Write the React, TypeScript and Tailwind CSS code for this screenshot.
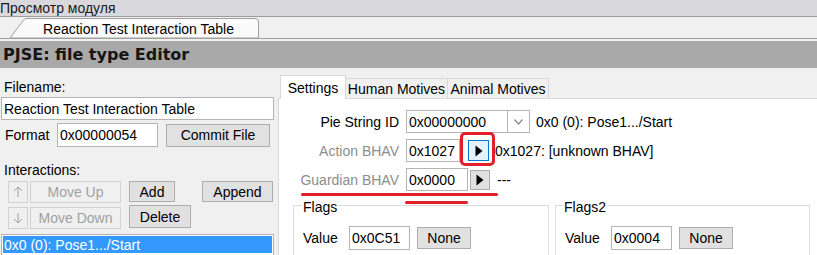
import React from "react";

const Btn = ({ children, className = "" }: { children: React.ReactNode; className?: string }) => (
  <div
    className={
      "flex items-center justify-center border border-[#adadad] bg-[#e1e1e1] text-[#000] shrink-0 " + className
    }
  >
    {children}
  </div>
);

const DisBtn = ({ children, className = "" }: { children: React.ReactNode; className?: string }) => (
  <div
    className={
      "flex items-center justify-center border border-[#d2d2d2] bg-[#f0f0f0] text-[#a0a0a0] shrink-0 " + className
    }
  >
    {children}
  </div>
);

const Tri = () => (
  <svg width="8" height="12" viewBox="0 0 8 12">
    <path d="M0.5 0.5 L7.5 6 L0.5 11.5 Z" fill="#000" />
  </svg>
);

export default function App() {
  return (
    <div className="w-[817px] h-[255px] overflow-hidden bg-[#f0f0f0] font-['Liberation_Sans',Arial,sans-serif] text-[14px] leading-[16px] text-black relative flex flex-col">
      {/* title bar */}
      <div className="shrink-0 h-[17px] bg-[#d9d9dd] border-b border-[#9d9d9d] flex items-center pl-0 text-[#1a1a1a]">
        Просмотр модуля
      </div>
      {/* tab strip */}
      <div className="shrink-0 h-[22px] border-b border-[#a0a0a0] bg-[#f0f0f0] flex items-end">
        <div className="relative ml-[10px] w-[249px] h-[20px] flex items-center justify-center">
          <svg className="absolute inset-0" width="249" height="20" viewBox="0 0 249 20">
            <path d="M0 20 L14 1.5 Q15 0.5 17 0.5 L245 0.5 Q248.5 0.5 248.5 4 L248.5 20 Z" fill="#fafafa" stroke="#a0a0a0" strokeWidth="1" />
          </svg>
          <span className="relative pl-[8px] pt-[1px]">Reaction Test Interaction Table</span>
        </div>
      </div>
      <div className="shrink-0 h-[2px] bg-[#f0f0f0]" />
      {/* header */}
      <div className="shrink-0 h-[27px] bg-[#a9a9a9] flex items-center pl-[3px] font-['DejaVu_Sans',sans-serif] font-bold text-[16px] text-[#151515]">
        PJSE: file type Editor
      </div>
      {/* content */}
      <div className="flex h-[187px] shrink-0">
        {/* left column */}
        <div className="w-[276px] flex flex-col pl-[1px] shrink-0">
          <div className="shrink-0 mt-[11px] h-[16px] pl-[3px]">Filename:</div>
          <div className="shrink-0 mt-[2px] w-[273px] h-[23px] bg-white border border-[#b4b4b4] flex items-center pl-[2px]">
            Reaction Test Interaction Table
          </div>
          <div className="shrink-0 mt-[3px] flex items-center h-[24px]">
            <span className="pl-[4px] w-[56px]">Format</span>
            <div className="w-[101px] h-[24px] bg-white border border-[#b4b4b4] flex items-center pl-[2px]">0x00000054</div>
            <Btn className="ml-[8px] w-[104px] h-[23px]">Commit File</Btn>
          </div>
          <div className="shrink-0 mt-[15px] h-[16px] pl-[3px]">Interactions:</div>
          <div className="shrink-0 mt-[3px] flex items-start h-[22px]">
            <DisBtn className="ml-[7px] w-[20px] h-[22px]">
              <svg width="10" height="12" viewBox="0 0 10 12">
                <path d="M5 1 L5 11 M1 5 L5 1 L9 5" fill="none" stroke="#a0a0a0" strokeWidth="1" />
              </svg>
            </DisBtn>
            <DisBtn className="ml-[2px] w-[91px] h-[22px]">Move Up</DisBtn>
            <Btn className="ml-[8px] w-[46px] h-[21px]">Add</Btn>
            <Btn className="ml-[27px] w-[71px] h-[21px]">Append</Btn>
          </div>
          <div className="shrink-0 mt-[4px] flex items-start h-[22px]">
            <DisBtn className="ml-[7px] w-[20px] h-[22px]">
              <svg width="10" height="12" viewBox="0 0 10 12">
                <path d="M5 1 L5 11 M1 7 L5 11 L9 7" fill="none" stroke="#a0a0a0" strokeWidth="1" />
              </svg>
            </DisBtn>
            <DisBtn className="ml-[2px] w-[91px] h-[22px]">Move Down</DisBtn>
            <Btn className="ml-[8px] w-[62px] h-[23px] -mt-[2px]">Delete</Btn>
          </div>
          <div className="mt-[5px] w-[273px] flex-1 bg-white border border-[#b4b4b4] border-b-0 pt-[1px] px-[1px]">
            <div className="h-[17px] bg-[#3399ff] text-white flex items-center pl-[1px]">0x0 (0): Pose1.../Start</div>
          </div>
        </div>
        {/* right tab control */}
        <div className="ml-[2px] flex-1 flex flex-col">
          <div className="shrink-0 h-[30px] flex items-end">
            <div className="ml-[2px] w-[66px] h-[24px] bg-white border border-[#d9d9d9] border-b-0 flex items-start justify-center pt-[4px] -mb-[1px] relative z-10">
              Settings
            </div>
            <div className="w-[102px] h-[20px] bg-[#f0f0f0] border border-[#d9d9d9] border-b-0 border-l-0 flex items-center justify-center">
              Human Motives
            </div>
            <div className="w-[101px] h-[20px] bg-[#f0f0f0] border border-[#d9d9d9] border-b-0 border-l-0 flex items-center justify-center">
              Animal Motives
            </div>
          </div>
          <div className="flex-1 min-h-0 overflow-hidden bg-white border-t border-l border-[#d9d9d9] flex flex-col">
            {/* Pie String ID row */}
            <div className="shrink-0 mt-[11px] flex items-center h-[23px]">
              <span className="w-[121px] text-right pr-[1px]">Pie String ID</span>
              <div className="ml-[6px] w-[124px] h-[23px] border border-[#b4b4b4] flex">
                <div className="flex-1 flex items-center pl-[2px]">0x00000000</div>
                <div className="w-[22px] border-l border-[#b4b4b4] flex items-center justify-center">
                  <svg width="9" height="6" viewBox="0 0 9 6">
                    <path d="M0.5 0.5 L4.5 5 L8.5 0.5" fill="none" stroke="#8a8a8a" strokeWidth="1.2" />
                  </svg>
                </div>
              </div>
              <span className="ml-[6px]">0x0 (0): Pose1.../Start</span>
            </div>
            {/* Action BHAV */}
            <div className="shrink-0 mt-[6px] flex items-center h-[23px]">
              <span className="w-[121px] text-right pr-[1px] text-[#8d8d8d]">Action BHAV</span>
              <div className="ml-[6px] w-[54px] h-[23px] border border-[#b4b4b4] flex items-center pl-[2px]">0x1027</div>
              <div className="ml-[8px] w-[21px] h-[21px] border border-[#0078d7] bg-[#e5f1fb] flex items-center justify-center">
                <Tri />
              </div>
              <span className="ml-[6px]">0x1027: [unknown BHAV]</span>
            </div>
            {/* Guardian BHAV */}
            <div className="shrink-0 mt-[6px] flex items-center h-[23px]">
              <span className="w-[121px] text-right pr-[1px] text-[#8d8d8d]">Guardian BHAV</span>
              <div className="ml-[6px] w-[62px] h-[23px] border border-[#b4b4b4] flex items-center pl-[2px]">0x0000</div>
              <div className="ml-[2px] w-[20px] h-[20px] border border-[#adadad] bg-[#e1e1e1] flex items-center justify-center">
                <Tri />
              </div>
              <span className="ml-[7px]">---</span>
            </div>
            {/* groups */}
            <div className="shrink-0 mt-[14px] flex">
              <div className="ml-[14px] w-[256px] h-[60px] border border-[#dcdcdc] relative">
                <span className="absolute -top-[7px] left-[8px] bg-white px-[1px]">Flags</span>
                <div className="mt-[20px] flex items-center">
                  <span className="ml-[9px] w-[46px]">Value</span>
                  <div className="w-[61px] h-[24px] border border-[#b4b4b4] flex items-center pl-[2px]">0x0C51</div>
                  <Btn className="ml-[7px] w-[54px] h-[22px]">None</Btn>
                </div>
              </div>
              <div className="ml-[6px] w-[255px] h-[60px] border border-[#dcdcdc] relative">
                <span className="absolute -top-[7px] left-[7px] bg-white px-[1px]">Flags2</span>
                <div className="mt-[20px] flex items-center">
                  <span className="ml-[9px] w-[46px]">Value</span>
                  <div className="w-[61px] h-[24px] border border-[#b4b4b4] flex items-center pl-[2px]">0x0004</div>
                  <Btn className="ml-[7px] w-[54px] h-[22px]">None</Btn>
                </div>
              </div>
            </div>
          </div>
        </div>
      </div>
      {/* red annotations */}
      <div className="absolute left-[460px] top-[132px] w-[35px] h-[34px] border-[3px] border-[#e0202a] rounded-[5px]" />
      <div className="absolute left-[301px] top-[193px] w-[197px] h-[3px] rounded-full bg-[#e0202a]" />
      <div className="absolute left-[405px] top-[201px] w-[63px] h-[3px] rounded-full bg-[#e0202a]" />
    </div>
  );
}
